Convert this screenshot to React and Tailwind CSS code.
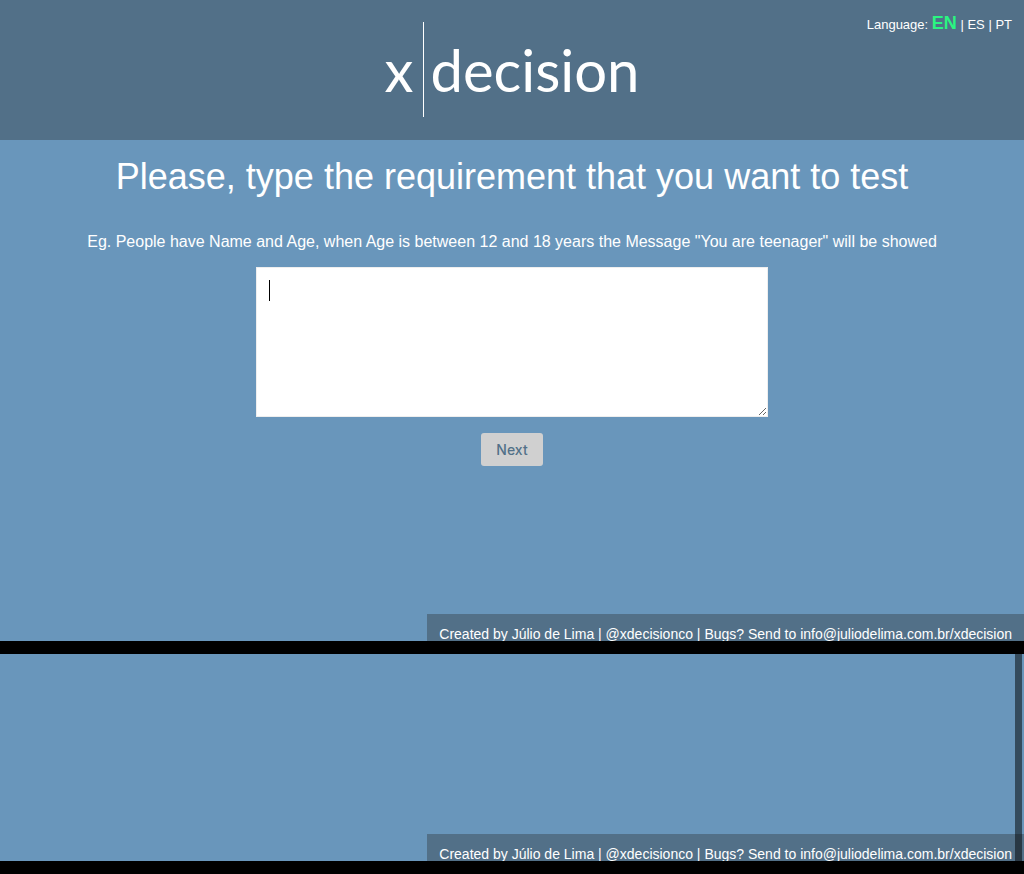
import React from "react";

function Logo() {
  return (
    <h1 className="flex items-center justify-center font-['Lato',sans-serif] text-[58px] leading-[95px] font-normal text-white">
      <span>x</span>
      <span className="mr-1.5 ml-2.5 h-[95px] w-px bg-white" aria-hidden="true" />
      <span>decision</span>
    </h1>
  );
}

function LanguageNav() {
  return (
    <nav aria-label="Language" className="absolute top-[11px] right-3 text-[13px] leading-6">
      Language:{" "}
      <a href="#en" className="text-[18px] font-bold text-[#2af581]">EN</a>
      {" | "}
      <a href="#es">ES</a>
      {" | "}
      <a href="#pt">PT</a>
    </nav>
  );
}

function Credits() {
  return (
    <footer className="h-[27px] self-end overflow-hidden bg-[#527088] px-3 pt-2 text-[14px] leading-6 whitespace-nowrap">
      Created by <a href="#author">Júlio de Lima</a> | <a href="#twitter">@xdecisionco</a> | Bugs? Send to{" "}
      <a href="mailto:info@juliodelima.com.br">info@juliodelima.com.br/xdecision</a>
    </footer>
  );
}

export default function App() {
  return (
    <div className="flex min-h-screen flex-col bg-[#6996bb] font-['Liberation_Sans',Arial,sans-serif] text-white">
      <section className="flex flex-col border-b-[13px] border-black">
        <header className="relative bg-[#527088] pt-[22px] pb-[23px]">
          <Logo />
          <LanguageNav />
        </header>
        <main className="flex flex-col items-center pt-[13px] pb-[148px] text-center">
          <h2 className="px-4 text-[36px] leading-[48px]">Please, type the requirement that you want to test</h2>
          <label htmlFor="requirement" className="mt-[29px] px-4 text-[16px] leading-6">
            Eg. People have Name and Age, when Age is between 12 and 18 years the Message "You are teenager" will be showed
          </label>
          <div className="relative mt-[13px] w-1/2">
            <textarea
              id="requirement"
              className="peer block h-[150px] w-full border border-[#eeeeee] bg-white p-3 text-[18px] leading-[21px] text-black outline-none"
              placeholder=" "
            />
            <span
              className="pointer-events-none absolute top-[13px] left-[13px] hidden h-[21px] w-px bg-black peer-placeholder-shown:block peer-focus:hidden"
              aria-hidden="true"
            />
          </div>
          <button
            type="button"
            className="mt-4 rounded-[3px] bg-[#d0d0d0] px-[15px] py-2 font-['Inter',sans-serif] text-[14px] leading-[17px] font-medium text-[#527088]"
          >
            Next
          </button>
        </main>
        <Credits />
      </section>
      <section className="relative flex flex-1 flex-col justify-end border-b-[13px] border-black">
        <Credits />
        <div className="absolute inset-y-0 right-[2px] w-[7px] bg-black/50" aria-hidden="true" />
      </section>
    </div>
  );
}
